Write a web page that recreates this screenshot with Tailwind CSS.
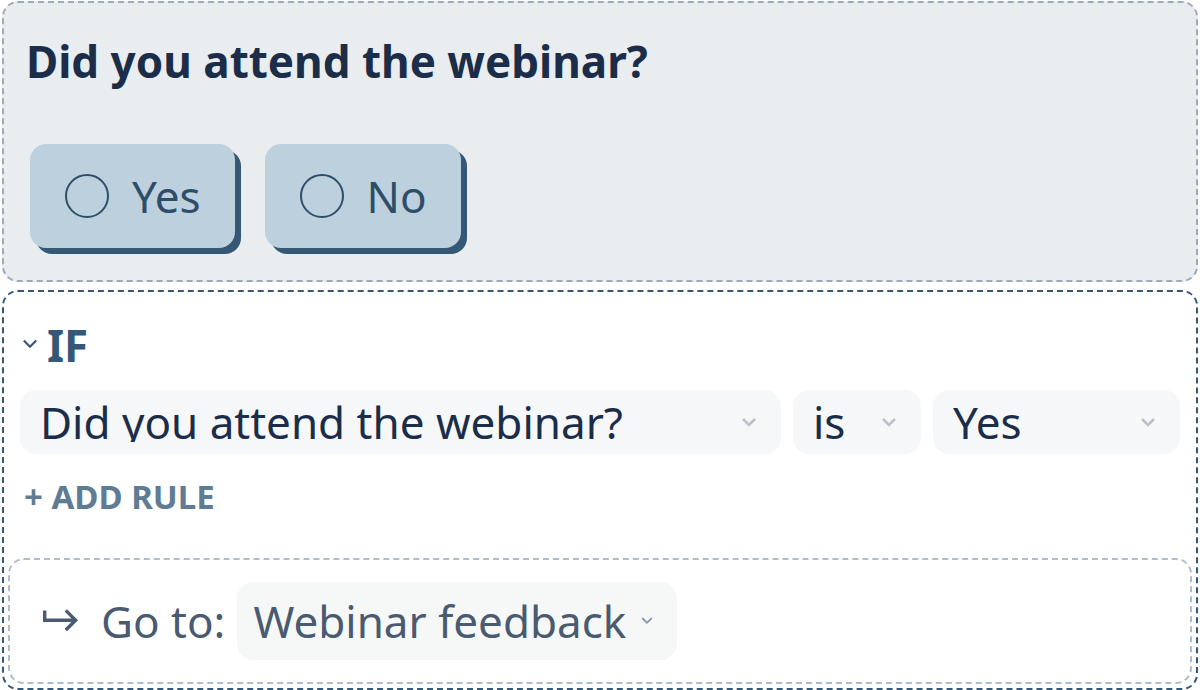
<!DOCTYPE html>
<html lang="en">
  <head>
    <meta charset="UTF-8" />
    <meta name="viewport" content="width=device-width, initial-scale=1.0" />
    <title>Webinar survey logic</title>
    <script src="https://cdn.jsdelivr.net/npm/@tailwindcss/browser@4"></script>
  </head>
  <body class="bg-white font-['Noto_Sans',sans-serif] text-[44px] leading-[60px] text-[#1b2d48]">
    <main class="flex flex-col gap-2 px-[2px] pt-px">
      <!-- question -->
      <fieldset class="rounded-2xl border-2 border-dashed border-[#9baabd] bg-[#e9edf0] px-[22px] pt-7 pb-8">
        <h1 class="font-bold" id="question">Did you attend the webinar?</h1>
        <div class="mt-[53px] ml-1 flex gap-[30px]" role="radiogroup" aria-labelledby="question">
          <label class="flex h-[104px] items-center gap-[23px] rounded-2xl bg-[#bdd0de] pr-[34px] pl-[35px] text-[#2e4d69] shadow-[6px_6px_0_#365877]">
            <input class="size-11 appearance-none rounded-full border-2 border-[#2e4d69] checked:bg-[#2e4d69]" type="radio" name="attend" value="yes" />
            Yes
          </label>
          <label class="flex h-[104px] items-center gap-[23px] rounded-2xl bg-[#bdd0de] pr-[34px] pl-[35px] text-[#2e4d69] shadow-[6px_6px_0_#365877]">
            <input class="size-11 appearance-none rounded-full border-2 border-[#2e4d69] checked:bg-[#2e4d69]" type="radio" name="attend" value="no" />
            No
          </label>
        </div>
      </fieldset>

      <!-- logic -->
      <section class="rounded-2xl border-2 border-dashed border-[#365877] px-1 pt-[23px] pb-1">
        <div class="px-3">
          <button class="flex items-center gap-[9px] pl-[2px] font-bold text-[#365877]" type="button" aria-expanded="true">
            <svg class="size-4" viewBox="0 0 16 16" fill="none" stroke="currentColor" stroke-width="2.2" aria-hidden="true">
              <path d="M1.8 3.5 8 9.7l6.200-6.200" />
            </svg>
            IF
          </button>

          <div class="mt-[15px] flex gap-3">
            <div class="relative flex-1">
              <select class="block h-16 w-full appearance-none rounded-2xl bg-[#f5f7f9] pt-[11px] pr-12 pb-3 pl-5 leading-10" aria-label="Question">
                <option>Did you attend the webinar?</option>
              </select>
              <svg class="pointer-events-none absolute top-6 right-6 size-4 text-[#bcc1c9]" viewBox="0 0 16 16" fill="none" stroke="currentColor" stroke-width="2.6" aria-hidden="true">
                <path d="M2 5l6 6 6-6" />
              </svg>
            </div>
            <div class="relative w-32">
              <select class="block h-16 w-full appearance-none rounded-2xl bg-[#f5f7f9] pt-[11px] pr-12 pb-3 pl-5 leading-10" aria-label="Condition">
                <option>is</option>
              </select>
              <svg class="pointer-events-none absolute top-6 right-6 size-4 text-[#bcc1c9]" viewBox="0 0 16 16" fill="none" stroke="currentColor" stroke-width="2.6" aria-hidden="true">
                <path d="M2 5l6 6 6-6" />
              </svg>
            </div>
            <div class="relative w-[247px]">
              <select class="block h-16 w-full appearance-none rounded-2xl bg-[#f5f7f9] pt-[11px] pr-12 pb-3 pl-5 leading-10" aria-label="Answer">
                <option>Yes</option>
                <option>No</option>
              </select>
              <svg class="pointer-events-none absolute top-6 right-6 size-4 text-[#bcc1c9]" viewBox="0 0 16 16" fill="none" stroke="currentColor" stroke-width="2.6" aria-hidden="true">
                <path d="M2 5l6 6 6-6" />
              </svg>
            </div>
          </div>

          <button class="mt-5 block pl-1 text-[33px] leading-[46px] font-bold text-[#607b94]" type="button">+ ADD RULE</button>
        </div>

        <div class="mt-[38px] flex items-center rounded-2xl border-2 border-dashed border-[#afbccb] px-8 py-[22px] text-[#4a5a70]">
          <svg class="h-6 w-9" viewBox="0 0 36 24" fill="none" stroke="currentColor" stroke-width="3.400" aria-hidden="true">
            <path d="M2.700 1.500v9.700H34" />
            <path d="M23.800 1.400l9.800 9.800-9.800 9.800" />
          </svg>
          <label class="ml-[23px]" for="target">Go to:</label>
          <div class="relative ml-3">
            <select class="block h-[78px] appearance-none rounded-2xl bg-[#f6f8f8] pr-[51px] pl-4" id="target">
              <option>Webinar feedback</option>
            </select>
            <svg class="pointer-events-none absolute top-8 right-6 size-3 text-[#8b98a8]" viewBox="0 0 12 12" fill="none" stroke="currentColor" stroke-width="1.800" aria-hidden="true">
              <path d="M1.200 4l4.800 4.800L10.800 4" />
            </svg>
          </div>
        </div>
      </section>
    </main>
  </body>
</html>
